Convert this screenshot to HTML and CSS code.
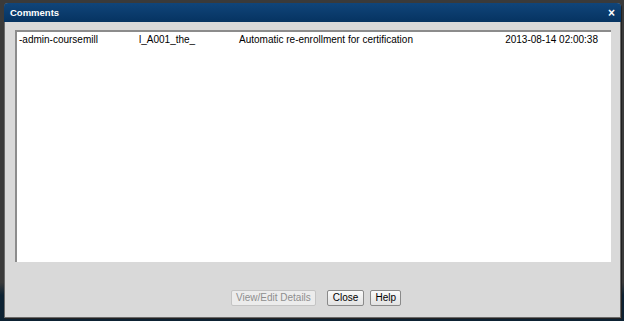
FILE: index.html
```html
<!DOCTYPE html>
<html>
<head>
<meta charset="utf-8">
<link rel="stylesheet" href="styles.css">
</head>
<body>
<div class="dialog">
  <div class="titlebar">
    <span class="title">Comments</span>
    <span class="close-x">×</span>
  </div>
  <div class="body">
    <div class="list">
      <div class="row">
        <span class="c-user">-admin-coursemill</span>
        <span class="c-id">l_A001_the_</span>
        <span class="c-text">Automatic re-enrollment for certification</span>
        <span class="c-date">2013-08-14 02:00:38</span>
      </div>
    </div>
    <div class="buttons">
      <button class="btn disabled">View/Edit Details</button>
      <button class="btn btn-close">Close</button>
      <button class="btn">Help</button>
    </div>
  </div>
</div>
</body>
</html>
```
FILE: styles.css
```css
html, body {
  margin: 0;
  padding: 0;
}
body {
  width: 624px;
  height: 321px;
  background: linear-gradient(to bottom, #3a3a3a 0, #3a3a3a 88%, #0d2233 92%, #0d2233 100%);
  font-family: "Liberation Sans", Arial, sans-serif;
  font-size: 10px;
  overflow: hidden;
  padding-top: 3px;
  padding-left: 4px;
  box-sizing: border-box;
}
.dialog {
  width: 617px;
  height: 315px;
  background: #d9d9d9;
  border: 1px solid #6a6a6a;
  border-top: none;
  border-radius: 4px 4px 0 0;
  box-sizing: border-box;
  display: flex;
  flex-direction: column;
  box-shadow: 1px 1px 0 #222;
}
.titlebar {
  height: 19px;
  background: linear-gradient(#10457a, #063361);
  border-radius: 4px 4px 0 0;
  display: flex;
  align-items: flex-start;
  justify-content: space-between;
  padding: 4px 6px 0 6px;
  box-sizing: border-box;
  color: #fff;
  margin: 0 -1px;
}
.title {
  font-weight: bold;
  font-size: 9.5px;
  line-height: 12px;
}
.close-x {
  font-weight: bold;
  font-size: 12px;
  line-height: 12px;
}
.body {
  flex: 1;
  padding: 8px 9px 0 10px;
  display: flex;
  flex-direction: column;
}
.list {
  height: 232px;
  background: #fff;
  border-top: 2px solid #8c8c8c;
  border-left: 2px solid #8c8c8c;
  box-sizing: border-box;
}
.row {
  display: flex;
  padding: 0 0 0 2px;
  height: 14px;
  align-items: center;
  color: #000;
}
.c-user { width: 120px; }
.c-id { width: 100px; }
.c-text { flex: 1; }
.c-date { padding-right: 13px; }
.buttons {
  display: flex;
  justify-content: center;
  margin-top: 28px;
  padding-left: 6px;
}
.btn {
  font-family: "Liberation Sans", Arial, sans-serif;
  font-size: 10px;
  height: 16px;
  padding: 0 4px;
  background: linear-gradient(#fafafa, #e2e2e2);
  border: 1px solid #8a8a8a;
  border-radius: 2px;
  color: #000;
  line-height: 14px;
  margin: 0 3px;
}
.btn.btn-close {
  padding: 0 5px;
}
.btn.disabled {
  color: #8e8e8e;
  border-color: #c4c4c4;
  background: #ececec;
  margin-right: 8px;
}
```
